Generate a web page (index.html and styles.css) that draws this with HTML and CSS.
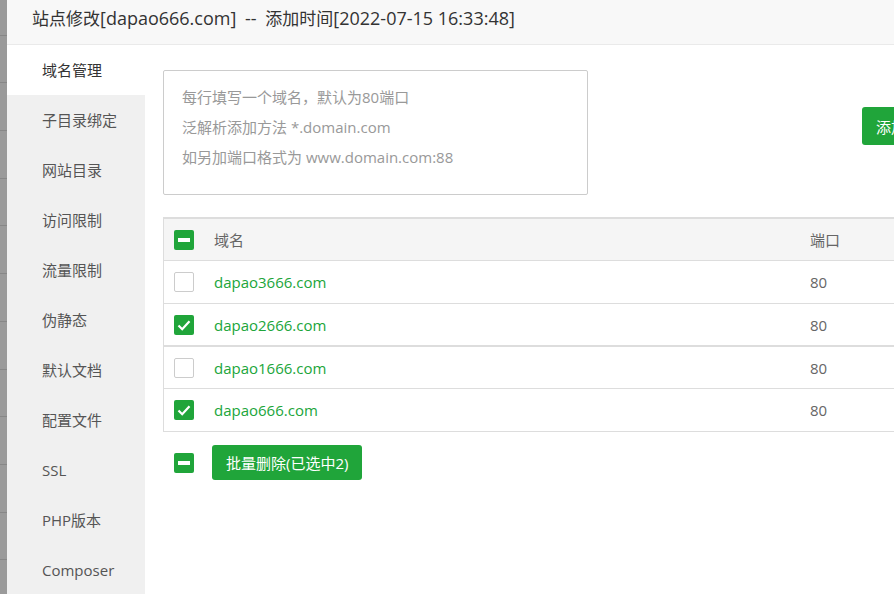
FILE: index.html
```html
<!DOCTYPE html>
<html lang="zh-CN">
<head>
<meta charset="utf-8">
<title>站点修改</title>
<link rel="stylesheet" href="styles.css">
</head>
<body>
<div class="backdrop"></div>
<div class="modal">
  <div class="modal-header"><span class="cjk">站点修改</span><span class="lat">[dapao666.com]</span><span class="lat dash"> -- </span><span class="cjk">添加时间</span><span class="lat">[2022-07-15 16:33:48]</span></div>
  <div class="modal-body">
    <ul class="side">
      <li class="side-item active">域名管理</li>
      <li class="side-item">子目录绑定</li>
      <li class="side-item">网站目录</li>
      <li class="side-item">访问限制</li>
      <li class="side-item">流量限制</li>
      <li class="side-item">伪静态</li>
      <li class="side-item">默认文档</li>
      <li class="side-item">配置文件</li>
      <li class="side-item">SSL</li>
      <li class="side-item">PHP版本</li>
      <li class="side-item">Composer</li>
    </ul>
    <div class="main">
      <div class="add-row">
        <textarea class="domain-input" placeholder="每行填写一个域名，默认为80端口&#10;泛解析添加方法 *.domain.com&#10;如另加端口格式为 www.domain.com:88"></textarea>
        <button class="btn btn-add">添加</button>
      </div>
      <table class="domains">
        <colgroup><col class="c-check"><col class="c-name"><col class="c-port"></colgroup>
        <thead>
          <tr>
            <th><span class="cb on"><svg viewBox="0 0 20 20"><rect x="4" y="8" width="12" height="4" fill="#fff"/></svg></span></th>
            <th>域名</th>
            <th>端口</th>
          </tr>
        </thead>
        <tbody>
          <tr><td><span class="cb"></span></td><td class="name">dapao3666.com</td><td>80</td></tr>
          <tr class="sep"><td><span class="cb on"><svg viewBox="0 0 20 20"><path d="M4.5 10.5 L8.2 14.2 L15.5 6.2" fill="none" stroke="#fff" stroke-width="2.2"/></svg></span></td><td class="name">dapao2666.com</td><td>80</td></tr>
          <tr class="short"><td><span class="cb"></span></td><td class="name">dapao1666.com</td><td>80</td></tr>
          <tr><td><span class="cb on"><svg viewBox="0 0 20 20"><path d="M4.5 10.5 L8.2 14.2 L15.5 6.2" fill="none" stroke="#fff" stroke-width="2.2"/></svg></span></td><td class="name">dapao666.com</td><td>80</td></tr>
        </tbody>
      </table>
      <div class="batch">
        <span class="cb on"><svg viewBox="0 0 20 20"><rect x="4" y="8" width="12" height="4" fill="#fff"/></svg></span>
        <button class="btn btn-batch">批量删除(已选中2)</button>
      </div>
    </div>
  </div>
</div>
</body>
</html>
```
FILE: styles.css
```css
html, body {
  margin: 0;
  padding: 0;
  height: 100%;
}
body {
  display: flex;
  overflow: hidden;
  font-family: "Open Sans", "Noto Sans CJK SC", sans-serif;
  font-size: 15px;
  color: #333;
  background: #fff;
}
.backdrop {
  width: 7px;
  flex: none;
  background-color: #9a9a9a;
  background-image: repeating-linear-gradient(to bottom, transparent 0, transparent 46.7px, #878787 46.7px, #878787 47.7px);
  background-position: 0 -12px;
}
.modal {
  flex: 1;
  min-width: 0;
  display: flex;
  flex-direction: column;
  background: #fff;
  overflow: hidden;
}
.modal-header {
  height: 45px;
  box-sizing: border-box;
  flex: none;
  background: #f8f8f8;
  border-bottom: 1px solid #eaeaea;
  padding-left: 25px;
  line-height: 37px;
  color: #333;
  white-space: pre;
}
.modal-header .cjk { font-size: 17px; }
.modal-header .lat { font-size: 18px; }
.modal-header .dash { word-spacing: 4px; }
.modal-body {
  flex: 1;
  display: flex;
  min-height: 0;
}
.side {
  list-style: none;
  margin: 0;
  padding: 0;
  width: 138px;
  flex: none;
  background: #f0f0f0;
}
.side-item {
  height: 50px;
  line-height: 50px;
  padding-left: 35px;
  color: #555;
}
.side-item.active {
  background: #fff;
  color: #333;
}
.main {
  flex: 1;
  min-width: 0;
  padding: 25px 0 0 18px;
  overflow: hidden;
}
.add-row {
  display: flex;
  align-items: flex-start;
  gap: 274px;
}
.domain-input {
  width: 425px;
  height: 125px;
  box-sizing: border-box;
  flex: none;
  margin: 0;
  padding: 11px 18px;
  border: 1px solid #ccc;
  border-radius: 2px;
  resize: none;
  font-family: "Open Sans", "Noto Sans CJK SC", sans-serif;
  font-size: 15px;
  line-height: 30px;
  color: #333;
  outline: none;
}
.domain-input::placeholder {
  color: #999;
}
.btn {
  border: none;
  background: #20a53a;
  color: #fff;
  font-family: "Open Sans", "Noto Sans CJK SC", sans-serif;
  font-size: 15px;
  padding: 0 14px;
  border-radius: 3px;
  white-space: nowrap;
  flex: none;
}
.btn-add {
  height: 38px;
  margin-top: 37px;
}
.domains {
  margin-top: 22px;
  width: 800px;
  table-layout: fixed;
  border-collapse: separate;
  border-spacing: 0;
  border-left: 1px solid #ddd;
  border-top: 2px solid #ddd;
}
.c-check { width: 40px; }
.c-name { width: 596px; }
.domains th, .domains td {
  padding: 0 10px;
  height: 42px;
  box-sizing: border-box;
  line-height: 20px;
  border-bottom: 1px solid #ddd;
  text-align: left;
  font-weight: normal;
  color: #666;
  vertical-align: middle;
  white-space: nowrap;
}
.domains th {
  background: #f5f5f5;
}
.domains td {
  height: 43px;
}
.domains tr.sep td {
  height: 43px;
  border-bottom-width: 2px;
}
.domains tr.short td {
  height: 42px;
}
.domains td.name {
  color: #20a53a;
}
.cb {
  display: block;
  width: 20px;
  height: 20px;
  box-sizing: border-box;
  border: 1px solid #ccc;
  border-radius: 2px;
  background: #fff;
}
.cb.on {
  border: none;
  background: #20a53a;
}
.cb svg {
  display: block;
  width: 20px;
  height: 20px;
}
.batch {
  display: flex;
  align-items: center;
  gap: 18px;
  margin-top: 13px;
  padding-left: 11px;
}
.btn-batch {
  height: 35px;
}
```
